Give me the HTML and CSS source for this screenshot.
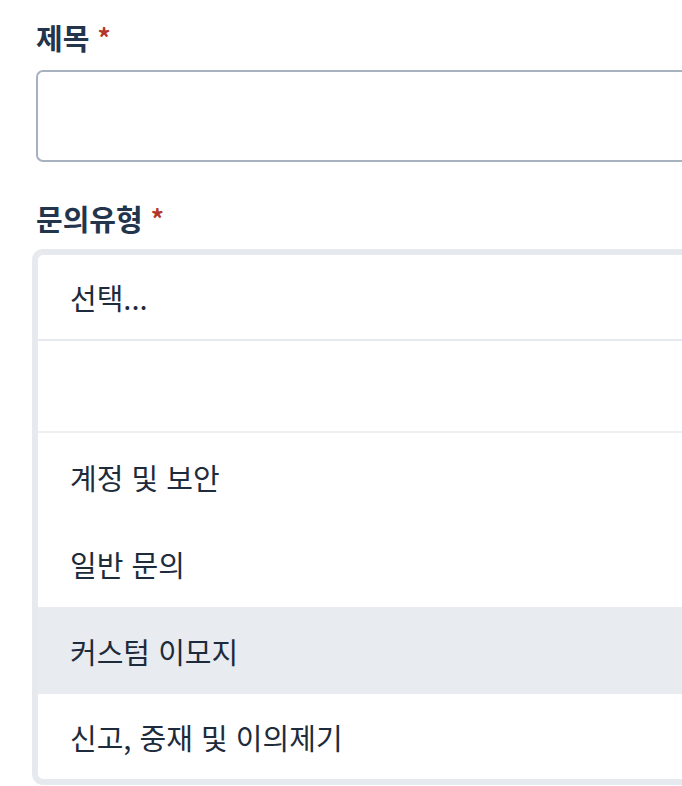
FILE: index.html
```html
<!DOCTYPE html>
<html lang="ko">
<head>
<meta charset="utf-8">
<link rel="stylesheet" href="styles.css">
</head>
<body>
<div class="form">
  <div class="field">
    <label class="label">제목 <span class="req">*</span></label>
    <div class="input"></div>
  </div>
  <div class="field field-select">
    <label class="label">문의유형 <span class="req">*</span></label>
    <div class="dropdown">
      <div class="current">선택...</div>
      <ul class="options">
        <li class="opt empty"></li>
        <li class="opt">계정 및 보안</li>
        <li class="opt">일반 문의</li>
        <li class="opt active">커스텀 이모지</li>
        <li class="opt last">신고, 중재 및 이의제기</li>
      </ul>
    </div>
  </div>
</div>
</body>
</html>
```
FILE: styles.css
```css
html, body {
  margin: 0;
  padding: 0;
  background: #ffffff;
  overflow: hidden;
}
body {
  font-family: "Noto Sans CJK KR", "Noto Sans", sans-serif;
  color: #1d2b3c;
}
.form {
  padding: 18px 0 0 36px;
  width: 646px;
}
.field {
  display: flex;
  flex-direction: column;
}
.label {
  font-size: 29px;
  line-height: 38px;
  font-weight: 700;
  color: #22354d;
  margin-bottom: 14px;
}
.req {
  color: #b3362b;
  font-size: 26px;
  font-weight: 700;
  vertical-align: 2px;
}
.input {
  box-sizing: border-box;
  height: 92px;
  margin-right: -20px;
  border: 2px solid #a7b2c1;
  border-right: 0;
  border-radius: 7px 0 0 7px;
  background: #fff;
}
.field-select {
  margin-top: 37px;
}
.field-select .label {
  margin-bottom: 12px;
}
.dropdown {
  margin-left: -4px;
  margin-right: -20px;
  border: 6px solid #e6e9ee;
  border-right: 0;
  border-radius: 11px 0 0 11px;
  background: #fff;
  overflow: hidden;
}
.current {
  height: 84px;
  border-bottom: 2px solid #e6e9ee;
  display: flex;
  align-items: center;
  padding-left: 32px;
  font-size: 29px;
  color: #1d2b3c;
}
.options {
  list-style: none;
  margin: 0;
  padding: 0;
}
.opt {
  height: 87px;
  display: flex;
  align-items: center;
  padding-left: 32px;
  font-size: 29px;
  color: #1d2b3c;
}
.opt.empty {
  height: 90px;
  border-bottom: 2px solid #eceef2;
}
.opt.active {
  background: #e8ebf0;
}
.opt.last {
  height: 85px;
}
```
